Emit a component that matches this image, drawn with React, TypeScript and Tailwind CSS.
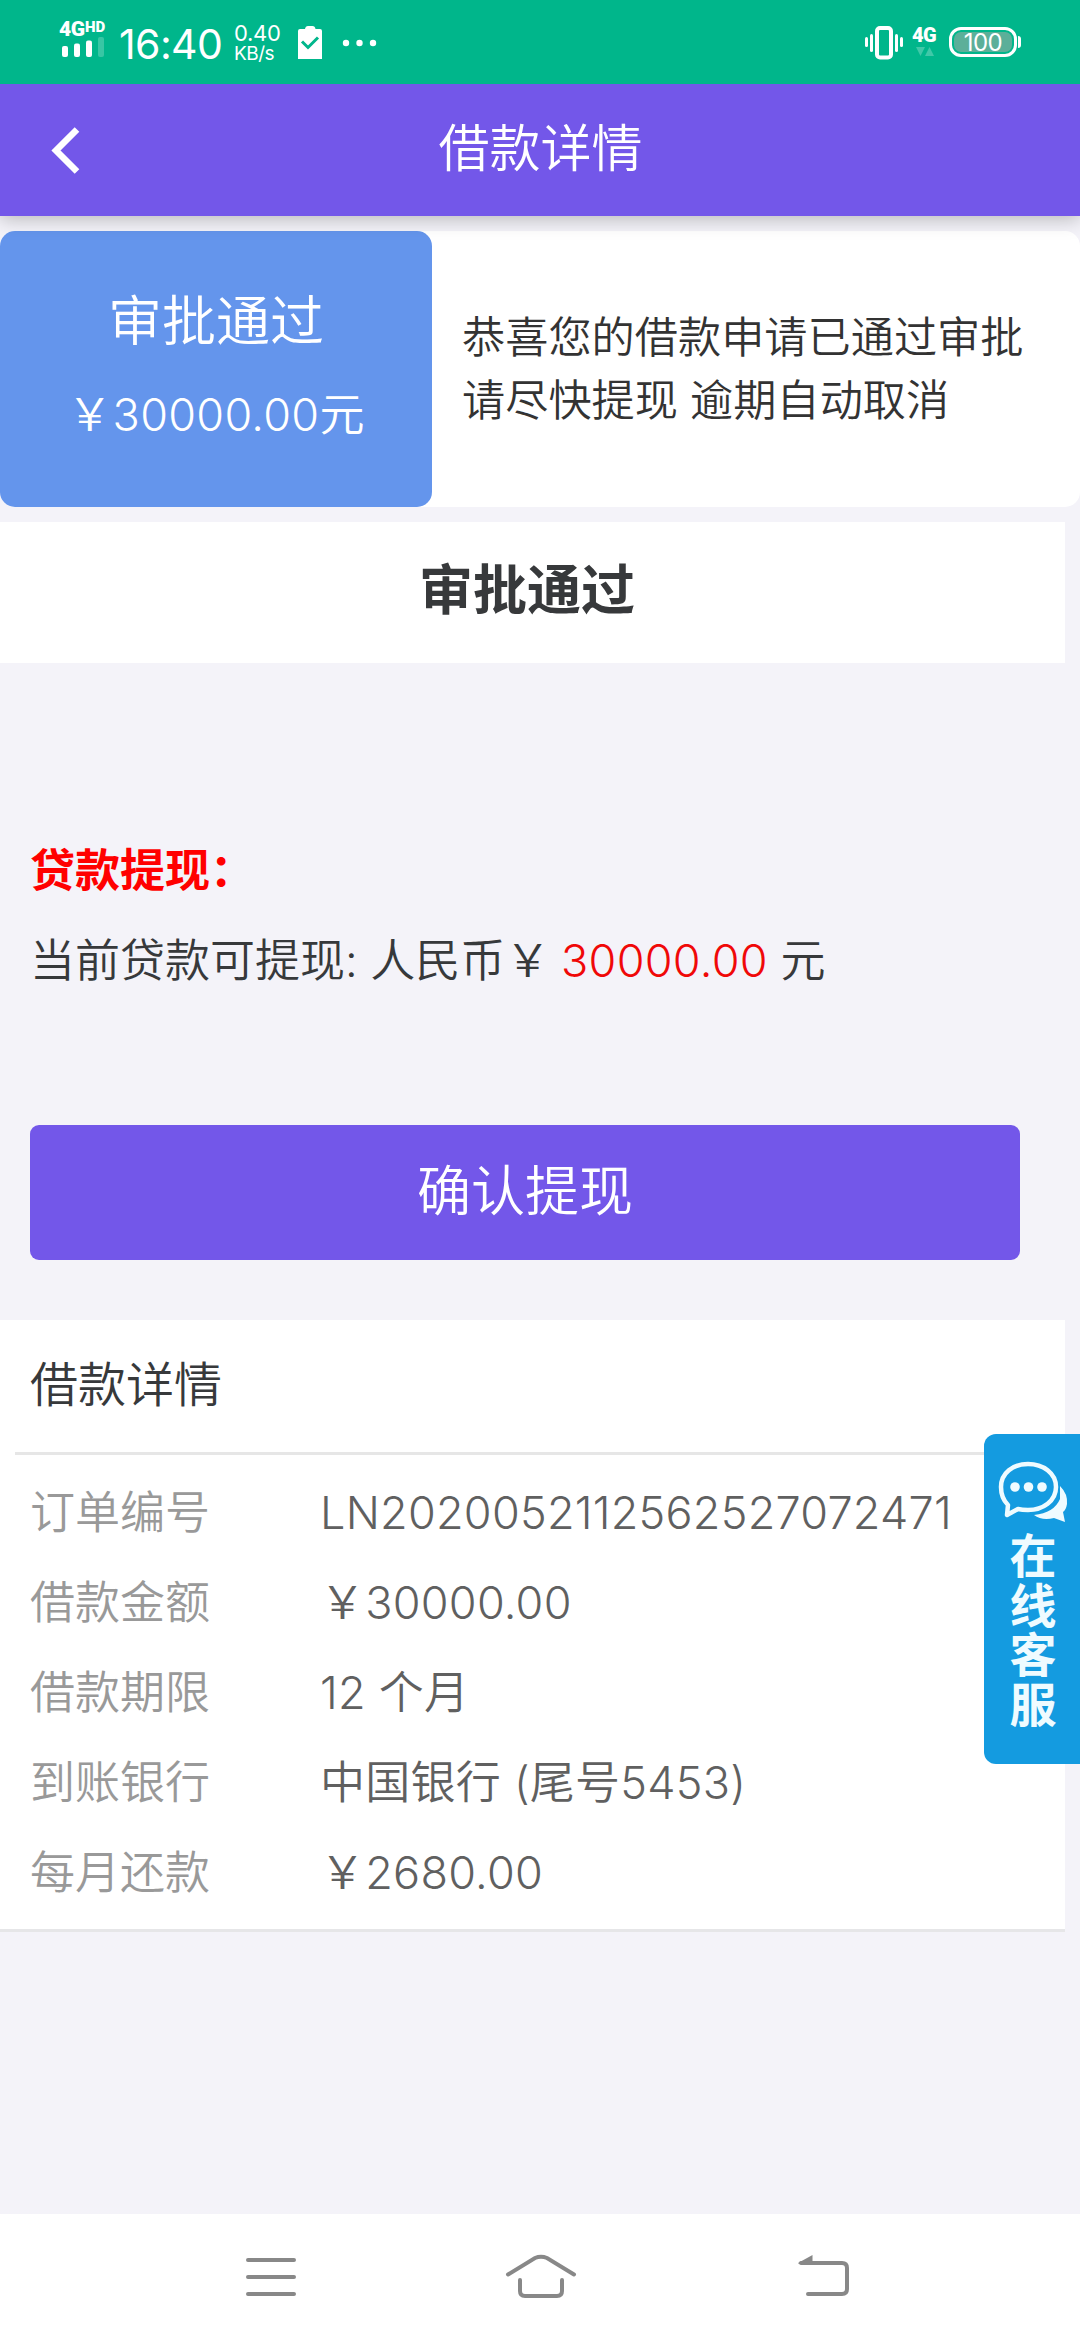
import React from "react";

type DetailItem = {
  label: string;
  value: string;
};

const details: DetailItem[] = [
  { label: "订单编号", value: "LN2020052112562527072471" },
  { label: "借款金额", value: "￥30000.00" },
  { label: "借款期限", value: "12 个月" },
  { label: "到账银行", value: "中国银行 (尾号5453)" },
  { label: "每月还款", value: "￥2680.00" },
];

const StatusBar = () => {
  return (
    <div className="relative z-20 flex h-[84px] items-start justify-between bg-[#00b68b] font-normal text-white">
      <div className="flex pl-[59px]">
        {/* signal */}
        <div className="w-[51px] pt-[20px]">
          <div className="flex items-start font-['Roboto',sans-serif] font-black">
            <span className="w-[26px] text-[21px] leading-[19px] tracking-[-0.5px]">4G</span>
            <span className="text-[15px] leading-[14px]">HD</span>
          </div>
          <svg width="46" height="21" viewBox="0 0 46 21" fill="#fff" className="-mt-[3px]">
            <rect x="3" y="10" width="6" height="11" rx="2" />
            <rect x="15" y="7.500" width="6" height="13.500" rx="2" />
            <rect x="27" y="4.500" width="6" height="16.500" rx="2" />
            <rect x="39" y="1" width="6" height="20" rx="2" opacity="0.22" />
          </svg>
        </div>
        <div className="w-[124px] pl-[9px] pt-[19px] text-[41px] leading-[50px] tracking-[-0.6px]">
          16:40
        </div>
        <div className="w-[64px] pt-[22px]">
          <div className="text-[22px] leading-[22px] tracking-[-0.3px]">0.40</div>
          <div className="text-[19px] leading-[19px] tracking-[-0.5px]">KB/s</div>
        </div>
        <svg width="24" height="34" viewBox="0 0 24 34" className="mt-[26px]">
          <path d="M0 5Q0 3 2 3H7Q7.500 0 10 0H14.500Q17 0 17.500 3H22Q24 3 24 5V33H0Z" fill="#fff" />
          <path d="M4 15.500L10 21.500L20 11.500" fill="none" stroke="#00b68b" strokeWidth="3" />
        </svg>
        <svg width="36" height="8" viewBox="0 0 36 8" fill="#fff" className="ml-[20px] mt-[39px]">
          <circle cx="4" cy="4" r="3.200" />
          <circle cx="17.500" cy="4" r="3.200" />
          <circle cx="31" cy="4" r="3.200" />
        </svg>
      </div>
      <div className="flex pr-[59px]">
        {/* vibrate */}
        <svg width="38" height="34" viewBox="0 0 38 34" className="mt-[26px]">
          <rect x="12" y="2" width="14" height="29.500" rx="3" fill="none" stroke="#fff" strokeWidth="4" />
          <g fill="#fff">
            <rect x="0" y="11" width="3" height="10" rx="1.500" />
            <rect x="5" y="8" width="3" height="18" rx="1.500" />
            <rect x="30" y="8" width="3" height="18" rx="1.500" />
            <rect x="35" y="11" width="3" height="10" rx="1.500" />
          </g>
        </svg>
        <div className="ml-[9px] w-[37px] pt-[26px]">
          <div className="font-['Roboto',sans-serif] text-[20px] font-black leading-[19px] tracking-[-0.5px]">4G</div>
          <svg width="26" height="12" viewBox="0 0 26 12" fill="#fff" opacity="0.25">
            <path d="M4 2H13L8.500 11Z" />
            <path d="M13 11H22L17.500 2Z" />
          </svg>
        </div>
        <div className="mt-[27px] flex items-start">
          <div className="h-[30px] w-[68px] rounded-[12px] border-[3px] border-white p-[2px]">
            <div className="h-[20px] rounded-[7px] bg-[#5caf99] text-center text-[24px] leading-[21px] tracking-[-0.5px]">
              100
            </div>
          </div>
          <div className="ml-px mt-[9px] h-[12px] w-[3px] rounded-r-[3px] bg-white" />
        </div>
      </div>
    </div>
  );
};

const Header = () => {
  return (
    <header className="relative z-10 flex h-[132px] items-center bg-[#7357e9] text-white shadow-[0_3px_18px_rgba(0,0,0,0.25)]">
      <svg width="30" height="48" viewBox="0 0 30 48" className="ml-[50px]">
        <path d="M27 3.500L6 24.500L27 45.500" fill="none" stroke="#fff" strokeWidth="6.500" />
      </svg>
      <h1 className="mr-[79px] flex-1 pb-[3px] text-center text-[51px] leading-[60px]">借款详情</h1>
    </header>
  );
};

const ServiceButton = () => {
  return (
    <button className="absolute right-0 top-[1434px] flex h-[330px] w-[96px] flex-col items-center rounded-l-[12px] bg-[#149be0] text-[#effbff]">
      <svg width="72" height="66" viewBox="0 0 72 66" className="ml-[4px] mt-[27px] shrink-0">
        <path d="M62 25Q70 33 69 43Q68 49 65 51L67 61L56 57Q44 60 36 54Q56 52 62 38Z" fill="#effbff" />
        <path
          d="M10 44Q3 37 3 26C3 12 15 3 30 3S58 12 58 26S45 49 30 49Q24 49 20 48L9 54Z"
          fill="#149be0"
          stroke="#effbff"
          strokeWidth="4.500"
          strokeLinejoin="round"
        />
        <circle cx="17" cy="26" r="4.800" fill="#effbff" />
        <circle cx="30.500" cy="26" r="4.800" fill="#effbff" />
        <circle cx="44" cy="26" r="4.800" fill="#effbff" />
      </svg>
      <span className="ml-[2px] mt-[4px] w-[47px] text-[47px] font-bold leading-[49.500px]">在线客服</span>
    </button>
  );
};

const NavBar = () => {
  return (
    <nav className="flex h-[126px] bg-white">
      <svg width="1080" height="126" viewBox="0 0 1080 126" fill="none" stroke="#888" strokeWidth="4" strokeLinecap="round">
        <path d="M248 46H294M248 63H294M248 80H294" />
        <path d="M508 60.500L535 44Q541 41.500 547 44L574 60.500" />
        <path d="M520 66V77Q520 82 525 82H557Q562 82 562 77V66" />
        <path d="M808 80H842Q847 80 847 75V54Q847 49 842 49H801" />
        <path d="M798 49L812.500 41V50H799Z" fill="#888" stroke="none" />
      </svg>
    </nav>
  );
};

const App = () => {
  return (
    <div className="relative flex h-[2340px] w-[1080px] flex-col overflow-hidden bg-[#f4f3f9] font-['Inter','Noto_Sans_CJK_SC',sans-serif] font-[350] text-[#37393b]">
      <StatusBar />
      <Header />

      <section className="mt-[15px] flex h-[276px] rounded-[15px] bg-white">
        <div className="w-[432px] rounded-[15px] bg-[#6495ec] pt-[51px] text-center text-white">
          <div className="text-[54px] leading-[80px]">审批通过</div>
          <div className="mt-[13px] text-[45px] leading-[80px] tracking-[0.3px]">￥30000.00元</div>
        </div>
        <div className="flex flex-1 flex-col justify-center pl-[30px] text-[43.200px] leading-[63px] text-[#333]">
          <p>恭喜您的借款申请已通过审批</p>
          <p>请尽快提现 逾期自动取消</p>
        </div>
      </section>

      <section className="mt-[15px] flex h-[141px] w-[1065px] items-center justify-center bg-white pb-[4px] pr-[11px] text-[54px] font-bold">
        审批通过
      </section>

      <section className="h-[657px] px-[30px] pt-[163px]">
        <h2 className="text-[45px] font-bold leading-[90px] text-[#f00]">贷款提现：</h2>
        <p className="text-[45px] leading-[90px]">
          当前贷款可提现: 人民币￥{" "}
          <span className="-ml-[2px] tracking-[0.3px] text-[#f00808]">30000.00</span> 元
        </p>
        <button className="mt-[119px] h-[135px] w-[990px] rounded-[9px] bg-[#7357e9] pb-[2px] text-[54px] text-white">
          确认提现
        </button>
      </section>

      <section className="h-[612px] w-[1065px] border-b-[3px] border-[#e6e6e8] bg-white">
        <h3 className="ml-[15px] h-[135px] border-b-[3px] border-[#e6e6e6] pl-[15px] text-[48px] leading-[130px]">
          借款详情
        </h3>
        <div className="pl-[30px] pt-[13px] text-[45px] leading-[90px]">
          {details.map((item) => (
            <div key={item.label} className="flex h-[90px]">
              <span className="w-[290px] text-[#999]">{item.label}</span>
              <span className="tracking-[0.25px] text-[#606060]">{item.value}</span>
            </div>
          ))}
        </div>
      </section>

      <div className="flex-1" />
      <NavBar />
      <ServiceButton />
    </div>
  );
};

export default App;
